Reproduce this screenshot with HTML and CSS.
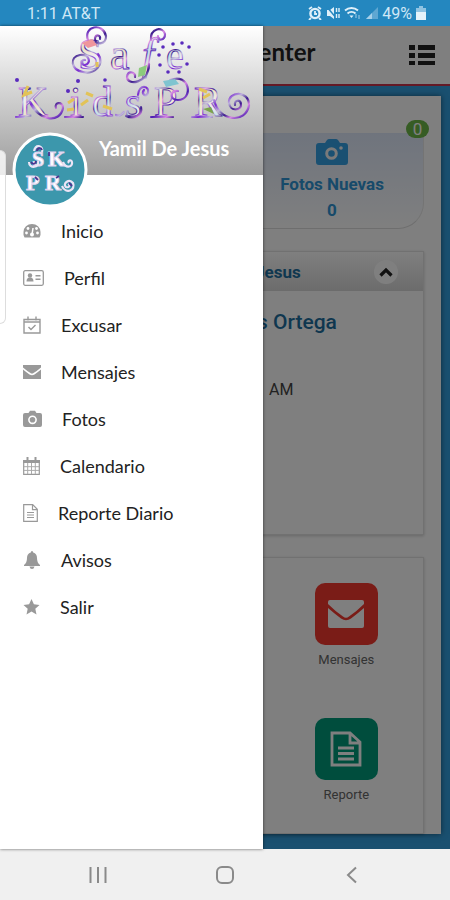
FILE: index.html
```html
<!DOCTYPE html>
<html lang="es">
<head>
  <meta charset="UTF-8" />
  <meta name="viewport" content="width=device-width, initial-scale=1.0" />
  <title>Safe KidsPR</title>
  <link rel="stylesheet" href="styles.css">
</head>
<body>
  <!-- Status bar -->
  <div class="status-bar">
    <span>1:11 AT&amp;T</span>
    <div class="status-icons">
      <svg width="14" height="14" viewBox="0 0 14 14"><circle cx="7" cy="7.5" r="4.6" fill="none" stroke="#dff0fa" stroke-width="2.4"/><path d="M7 5v3h2M1 3l3-2M13 3l-3-2M3 12l-2 2M11 12l2 2" fill="none" stroke="#dff0fa" stroke-width="1.8"/></svg>
      <svg width="14" height="14" viewBox="0 0 14 14"><path d="M1 4h3l4-3v12L4 10H1z" fill="#dff0fa"/><path d="M1 1l10 12" stroke="#2487bf" stroke-width="1.4"/><path d="M10.5 2v4M10.5 8v4M13 2v4M13 8v4" stroke="#dff0fa" stroke-width="1.4"/></svg>
      <svg width="17" height="14" viewBox="0 0 17 14"><path d="M1 4.5a10 10 0 0 1 13 0M3.5 7.5a6 6 0 0 1 8 0" fill="none" stroke="#dff0fa" stroke-width="2"/><path d="M5.5 9.5h4L7.5 12z" fill="#dff0fa"/><path d="M12 12V8M15 9v4" stroke="#8fc3e2" stroke-width="1.2"/></svg>
      <svg width="13" height="14" viewBox="0 0 13 14"><path d="M13 1v12H1z" fill="#5ea7d2"/><path d="M7 7v6H1z" fill="#a5d0e9"/></svg>
      <span>49%</span>
      <svg width="10" height="14" viewBox="0 0 10 14"><path d="M3 0h4v2h3v5H0V2h3z" fill="#8fc3e2"/><path d="M0 6h10v8H0z" fill="#e4f2fa"/></svg>
    </div>
  </div>

  <div class="screen">
    <!-- Page behind the drawer -->
    <header class="top-bar">
      <h1>Center</h1>
      <button class="list-btn" aria-label="Lista">
        <svg width="28" height="22" viewBox="0 0 28 22"><path d="M1 1h6v5H1zM10 1h17v5H10zM1 9h6v5H1zM10 9h17v5H10zM1 17h6v4H1zM10 17h17v4H10z" fill="#222"/></svg>
      </button>
    </header>

    <main class="page">
      <div class="panel">
        <div class="counters">
          <div class="counter">
            <span class="badge">0</span>
            <svg width="32" height="26" viewBox="0 0 32 26"><path d="M3 4h6l2-3q1-1 2-1h7q1 0 2 1l2 3h5q3 0 3 3v16q0 3-3 3H3q-3 0-3-3V7q0-3 3-3z" fill="#34a0e4"/><circle cx="15.5" cy="14.5" r="4.8" fill="#34a0e4" stroke="#f4f4f4" stroke-width="3"/><circle cx="25" cy="9" r="1.8" fill="#f4f4f4"/></svg>
            <strong>Fotos Nuevas</strong>
            <strong>0</strong>
          </div>
        </div>

        <section class="card student">
          <div class="card-head">
            <h2>Jesus</h2>
            <button class="collapse-btn" aria-label="Cerrar">
              <svg width="14" height="10" viewBox="0 0 14 10"><path d="M1.5 8.5L7 3l5.5 5.5" fill="none" stroke="#222" stroke-width="3.2"/></svg>
            </button>
          </div>
          <h3>s Ortega</h3>
          <p>AM</p>
        </section>

        <section class="card tiles">
          <a class="tile" href="#mensajes">
            <span class="tile-icon red">
              <svg width="38" height="30" viewBox="0 0 38 30"><path d="M3 1h32q2 0 2 2v2Q30 12 22 17.5q-3 2.500-6 0Q8 12 1 5V3q0-2 2-2z" fill="#fff"/><path d="M1 9q7 6 13 10.500 5 3.500 10 0Q30 15 37 9v18q0 2-2 2H3q-2 0-2-2z" fill="#fff"/></svg>
            </span>
            Mensajes
          </a>
          <a class="tile" href="#reporte">
            <span class="tile-icon green">
              <svg width="32" height="36" viewBox="0 0 32 36"><path d="M2 2h18l10 9v23H2zM20 2v10h10M8 17h16M8 22.500h16M8 28h16" fill="none" stroke="#fff" stroke-width="2.800"/></svg>
            </span>
            Reporte
          </a>
        </section>
      </div>
    </main>

    <div class="overlay"></div>

    <!-- Drawer -->
    <aside class="drawer">
      <div class="drawer-head">
        <svg class="logo" viewBox="0 0 263 100" role="img" aria-label="Safe KidsPR">
          <defs>
            <linearGradient id="ink" x1="0" y1="0" x2="16" y2="22" gradientUnits="userSpaceOnUse" spreadMethod="reflect">
              <stop offset="0" stop-color="#4a1cb0"/>
              <stop offset=".3" stop-color="#d888e4"/>
              <stop offset=".5" stop-color="#3b1a8c"/>
              <stop offset=".75" stop-color="#c0b4dc"/>
              <stop offset="1" stop-color="#7a2bd0"/>
            </linearGradient>
            <linearGradient id="candy" x1="0" y1="0" x2="36" y2="30" gradientUnits="userSpaceOnUse" spreadMethod="reflect">
              <stop offset="0" stop-color="#f0ecf4"/>
              <stop offset=".35" stop-color="#ece4c4"/>
              <stop offset=".6" stop-color="#eceef2"/>
              <stop offset=".8" stop-color="#c4dfe4"/>
              <stop offset="1" stop-color="#eedbe2"/>
            </linearGradient>
          </defs>
          <g class="logo-text">
            <text y="43" font-size="44"><tspan x="78">S</tspan><tspan x="110">a</tspan><tspan x="142" font-style="italic">f</tspan><tspan x="166" font-size="40">e</tspan></text>
            <text y="90" font-size="42"><tspan x="18">K</tspan><tspan x="70">i</tspan><tspan x="92">d</tspan><tspan x="125">s</tspan><tspan x="154">P</tspan><tspan x="194">R</tspan></text>
          </g>
          <g fill="none" stroke="url(#ink)" stroke-width="2.2" stroke-linecap="round">
            <path d="M88 14c-5-14 15-18 18-4 1 9-12 10-11 2 1-4 6-3 5 1"/>
            <path d="M98 28c8 10-4 21-15 18-12-2-14-15-3-17 9-1 12 8 5 10-5 0-4-6 0-5"/>
            <path d="M151 14c-1-12 12-14 14-6 0 7-8 7-7 2M149 38c0 20-22 22-22 13 1-7 9-5 8 0"/>
            <path d="M30 76c8 19 30 22 33 6 0-7-9-6-7 0M214 74c5 22 32 24 35 5 0-15-21-14-20-2 1 9 13 8 12 1-1-5-7-4-6 1"/>
            <path d="M138 69c1-12 12-9 10-2-2 5-7 1-4-3M170 54c20-8 24 20 8 20-9 0-8-10 0-9"/>
            <path d="M116 89q4 2 8-3M126 90c8 4 17-1 15-9M65 91h18M151 91h22M192 91h20M16 91h8"/>
          </g>
          <g fill="#5a2bbd">
            <circle cx="163" cy="21" r="1.8"/><circle cx="173" cy="18" r="1.8"/><circle cx="182" cy="17" r="1.8"/><circle cx="189" cy="21" r="1.8"/><circle cx="159" cy="29" r="1.8"/><circle cx="160" cy="39" r="1.8"/><circle cx="168" cy="46" r="1.8"/><circle cx="179" cy="46" r="1.8"/><circle cx="187" cy="38" r="1.8"/><circle cx="105" cy="54" r="1.8"/><circle cx="17" cy="54" r="2"/><circle cx="68" cy="65" r="2"/><circle cx="78" cy="55" r="2"/>
          </g>
          <path d="M68 77l6-4M67 84l7-1M81 79l7-5M103 80l9 3M93 70l-7-3M199 63l8 3M203 72l7-4M28 60l-4 9 8-3M97 36v5" fill="none" stroke="#e2c358" stroke-width="3"/>
          <path d="M139 42l8-3-2 10-7 2z" fill="#8ccb7c"/>
          <path d="M82 17l10-4 5 6-9 3z" fill="#ef959c"/>
          <path d="M163 55l12-2 4 5-13 3z" fill="#7fc4d0"/>
          <path d="M203 83l8-2 3 7z" fill="#7ba44c"/>
        </svg>
        <div class="profile">
          <svg class="avatar" width="76" height="76" viewBox="0 0 76 76" role="img" aria-label="SKPR">
            <circle cx="38" cy="38" r="36" fill="#3c97ac" stroke="#fff" stroke-width="3"/>
            <g class="avatar-text">
              <text y="34" font-size="22"><tspan x="20">S</tspan><tspan x="36">K</tspan></text>
              <text y="58" font-size="22"><tspan x="14">P</tspan><tspan x="33">R</tspan></text>
            </g>
            <path d="M51 30c3 7 10 5 9 0-1-3-5-1-3 1M50 54c4 9 14 4 11-3-4-5-11 1-7 4 3 1 5-2 2-3M17 30c0 7 11 6 9-1M22 19c2-8 10-5 8 1" fill="none" stroke="#ece4f6" stroke-width="2.2"/>
            <path d="M19 30c2 3 5 2 5-1M25 19c0-3 4-4 5-1M57 51l3 3M37 20v4M23 45l3 3M44 46l3-2" stroke="#4c3490" stroke-width="1.8" fill="none"/>
          </svg>
          <span>Yamil De Jesus</span>
        </div>
      </div>

      <nav class="menu">
        <a href="#inicio">
          <svg width="18" height="18" viewBox="0 0 18 18"><path d="M1.5 15.5Q0 13 .5 10a8.500 8 0 0 1 17 0q.5 3-1 5.500z" fill="#999"/><path d="M9 13l1-7" stroke="#fff" stroke-width="1.5"/><circle cx="9" cy="12.5" r="2" fill="#fff"/><g fill="#fff"><circle cx="3.5" cy="11" r="1.4"/><circle cx="5" cy="6.5" r="1.4"/><circle cx="13.5" cy="6.5" r="1.4"/><circle cx="14.5" cy="11" r="1.4"/></g></svg>
          Inicio
        </a>
        <a href="#perfil">
          <svg width="21" height="18" viewBox="0 0 21 18"><rect x=".7" y="1.7" width="19.6" height="14.6" rx="1.5" fill="none" stroke="#999" stroke-width="1.3"/><circle cx="7" cy="6.5" r="2.2" fill="#999"/><path d="M3.5 12.5q0-4 3.500-4t3.500 4zM12.5 6h5v1.500h-5zM12.5 9.500h5V11h-5z" fill="#999"/></svg>
          Perfil
        </a>
        <a href="#excusar">
          <svg width="18" height="18" viewBox="0 0 18 18"><path d="M1 3.5h16v13.500H1zM1 6h16M5 .5v4M13 .5v4" fill="none" stroke="#999" stroke-width="1.4"/><path d="M5.5 11l2.500 2.500L12.500 9" fill="none" stroke="#999" stroke-width="1.4"/></svg>
          Excusar
        </a>
        <a href="#mensajes">
          <svg width="18" height="18" viewBox="0 0 18 18"><path d="M0 2h18v2.500q-4 3.500-7.500 5.500-1.500 1-3 0Q4 8 0 4.500z" fill="#999"/><path d="M0 6.500q3 2.500 6.500 5 2.500 1.500 5 0Q15 9 18 6.500V16H0z" fill="#999"/></svg>
          Mensajes
        </a>
        <a href="#fotos">
          <svg width="19" height="18" viewBox="0 0 19 18"><path d="M2 3h3.500L7 .7h5L13.500 3H17q2 0 2 2v10q0 2-2 2H2q-2 0-2-2V5q0-2 2-2z" fill="#999"/><circle cx="9.5" cy="9.8" r="3.6" fill="#999" stroke="#fff" stroke-width="1.6"/></svg>
          Fotos
        </a>
        <a href="#calendario">
          <svg width="17" height="18" viewBox="0 0 17 18"><path d="M.7 3.500h15.600v13.800H.7z" fill="none" stroke="#999" stroke-width="1.2"/><path d="M0 3h17v3H0zM3.500 0h2v4h-2zM11.500 0h2v4h-2z" fill="#999"/><path d="M4.700 6v11M8.500 6v11M12.300 6v11M1 9.700h15M1 13.400h15" stroke="#aaa" stroke-width="1"/></svg>
          Calendario
        </a>
        <a href="#reporte">
          <svg width="15" height="18" viewBox="0 0 15 18"><path d="M.7.7h9l4.600 4.600v12H.7zM9.500.7v5h5M4 8.500h7M4 11h7M4 13.500h7" fill="none" stroke="#999" stroke-width="1.2"/></svg>
          Reporte Diario
        </a>
        <a href="#avisos">
          <svg width="18" height="18" viewBox="0 0 18 18"><path d="M9 0q1.200 0 1.200 1.500Q14 2.500 14 7q0 5 3 7v1H1v-1q3-2 3-7 0-4.500 3.800-5.500Q7.800 0 9 0zM6.500 15.500h5Q11 18 9 18t-2.500-2.500z" fill="#999"/></svg>
          Avisos
        </a>
        <a href="#salir">
          <svg width="17" height="18" viewBox="0 0 17 18"><path d="M8.500 1l2.400 5.300 5.600.6-4.200 3.900 1.200 5.700-5-2.900-5 2.900 1.200-5.700L.5 6.900l5.600-.6z" fill="#999"/></svg>
          Salir
        </a>
      </nav>
    </aside>

    <div class="edge-handle"></div>
  </div>

  <!-- Android navigation -->
  <div class="nav-bar">
    <button aria-label="Recientes"><svg width="20" height="20" viewBox="0 0 20 20"><path d="M2.500 2v16M10 2v16M17.500 2v16" stroke="#8a8a8a" stroke-width="2"/></svg></button>
    <button aria-label="Inicio"><svg width="20" height="20" viewBox="0 0 20 20"><rect x="2" y="2" width="16" height="16" rx="5" fill="none" stroke="#8a8a8a" stroke-width="2"/></svg></button>
    <button aria-label="Atras"><svg width="20" height="20" viewBox="0 0 20 20"><path d="M14 2.500L6 10l8 7.500" fill="none" stroke="#8a8a8a" stroke-width="2"/></svg></button>
  </div>
</body>
</html>
```
FILE: styles.css
```css
* {
  box-sizing: border-box;
}

body {
  margin: 0;
  min-height: 100vh;
  display: flex;
  flex-direction: column;
  font-family: Roboto, sans-serif;
  background: #f0f0f0;
}

h1, h2, h3, p {
  margin: 0;
}

a {
  text-decoration: none;
}

button {
  padding: 0;
  border: none;
  background: none;
  cursor: pointer;
}

svg {
  display: block;
  flex-shrink: 0;
}

/* Status bar */
.status-bar {
  height: 26px;
  padding: 0 24px 0 27px;
  display: flex;
  align-items: center;
  justify-content: space-between;
  background: #2487bf;
  color: #cfe8f6;
  font-size: 16px;
}

.status-icons {
  display: flex;
  align-items: center;
  gap: 4px;
}

/* Page behind the drawer */
.screen {
  flex: 1;
  position: relative;
  display: flex;
  flex-direction: column;
  background: #34a0e0;
}

.top-bar {
  height: 60px;
  padding: 0 14px 8px 243px;
  display: flex;
  align-items: center;
  justify-content: space-between;
  background: #fff;
  border-bottom: 2px solid #c8344c;
}

.top-bar h1 {
  font-family: Lato, sans-serif;
  font-size: 24px;
  color: #222;
}

.list-btn {
  padding-top: 8px;
}

.page {
  flex: 1;
  display: flex;
  padding: 10px 9px 15px;
}

.panel {
  flex: 1;
  display: flex;
  flex-direction: column;
  gap: 22px;
  padding: 37px 17px 0;
  background: #fff;
  box-shadow: 0 0 6px rgba(0, 0, 0, 0.5);
}

.counters {
  display: grid;
  grid-template-columns: 1fr 1fr;
  gap: 32px;
}

.counter {
  grid-column: 2;
  position: relative;
  height: 96px;
  padding-top: 6px;
  display: flex;
  flex-direction: column;
  align-items: center;
  gap: 6px;
  border-bottom: 1px solid #ddd;
  border-right: 1px solid #e8e8e8;
  border-radius: 0 0 26px 0;
  background: linear-gradient(#dfe9fb, #fff);
  color: #2f94d4;
  font-size: 17px;
  line-height: 20px;
}

.counter svg {
  margin-bottom: 3px;
}

.badge {
  position: absolute;
  top: -13px;
  right: -6px;
  width: 23px;
  border-radius: 9px;
  background: #6cb848;
  color: #fff;
  line-height: 18px;
  text-align: center;
}

.card {
  background: #fff;
  border: 1px solid #e2e2e2;
  box-shadow: 0 1px 3px rgba(0, 0, 0, 0.2);
}

.student {
  height: 284px;
  padding-left: 230px;
}

.card-head {
  height: 39px;
  margin-left: -230px;
  padding: 0 25px 0 228px;
  display: flex;
  align-items: center;
  justify-content: space-between;
  background: linear-gradient(#fff, #d8d8d8);
}

.card-head h2 {
  font-size: 17px;
  color: #1f6f9f;
}

.collapse-btn {
  width: 24px;
  height: 24px;
  display: flex;
  align-items: center;
  justify-content: center;
  border-radius: 50%;
  background: #fff;
}

.student h3 {
  padding-top: 19px;
  font-size: 21px;
  font-weight: 500;
  line-height: 24px;
  color: #1f6f9f;
}

.student p {
  padding: 46px 0 0 12px;
  font-size: 16px;
  line-height: 19px;
  color: #444;
}

.tiles {
  flex: 1;
  display: grid;
  grid-template-columns: repeat(3, 1fr);
  align-content: start;
  row-gap: 49px;
  padding: 25px 16px 0;
}

.tile {
  grid-column: 3;
  display: flex;
  flex-direction: column;
  align-items: center;
  gap: 6px;
  color: #666;
  font-size: 13px;
  line-height: 18px;
}

.tile-icon {
  width: 63px;
  height: 62px;
  display: flex;
  align-items: center;
  justify-content: center;
  border-radius: 10px;
}

.red {
  background: #f5392f;
}

.green {
  background: #009a7b;
}

.overlay {
  position: absolute;
  inset: 0;
  background: rgba(0, 0, 0, 0.5);
}

/* Drawer */
.drawer {
  position: absolute;
  top: 0;
  bottom: 0;
  left: 0;
  width: 263px;
  background: #fff;
  box-shadow: 0 0 3px rgba(0, 0, 0, 0.6);
}

.drawer-head {
  height: 149px;
  background: linear-gradient(#fff, #9c9c9c);
}

.logo {
  width: 100%;
  overflow: visible;
}

.logo-text {
  font-family: "Liberation Serif", serif;
  fill: url(#candy);
  stroke: url(#ink);
  stroke-width: 1px;
}

.profile {
  display: flex;
  gap: 11px;
  padding: 6px 0 0 12px;
  color: #fff;
  font-family: Lato, sans-serif;
  font-size: 20px;
  font-weight: bold;
  line-height: 32px;
}

.avatar-text {
  font-family: "Liberation Serif", serif;
  font-weight: bold;
  fill: #fff;
  stroke: #e0d4f0;
  stroke-width: 1px;
}

.menu {
  padding-top: 32px;
}

.menu a {
  height: 47px;
  padding-left: 23px;
  display: flex;
  align-items: center;
  gap: 20px;
  color: #222;
  font-family: Lato, sans-serif;
  font-size: 18px;
}

.edge-handle {
  position: absolute;
  top: 124px;
  left: 0;
  width: 6px;
  height: 174px;
  border: 1px solid #ddd;
  border-left: none;
  border-radius: 0 6px 6px 0;
  background: rgba(255, 255, 255, 0.8);
}

/* Android navigation */
.nav-bar {
  height: 51px;
  padding: 0 35px;
  display: flex;
  align-items: center;
}

.nav-bar button {
  flex: 1;
  display: flex;
  justify-content: center;
}
```
